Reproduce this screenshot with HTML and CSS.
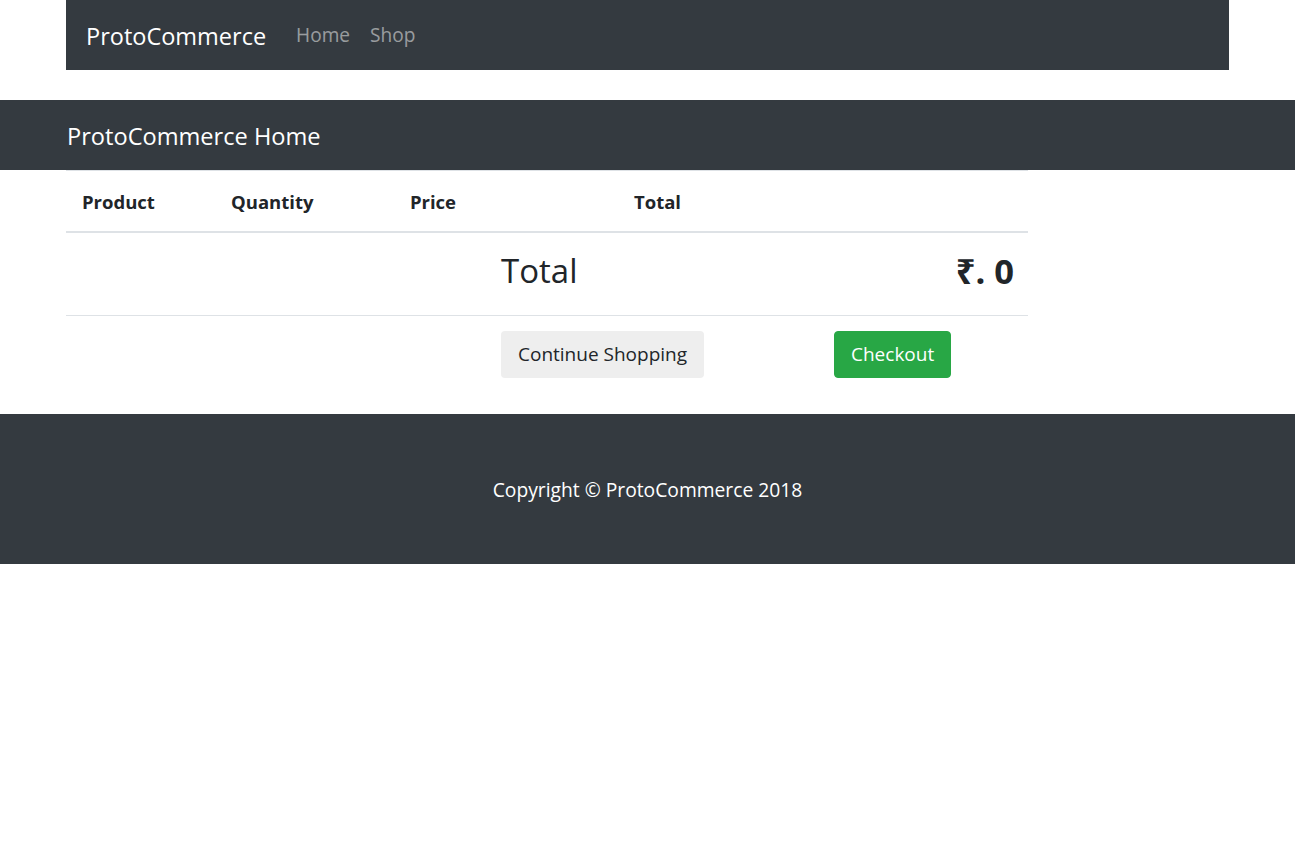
FILE: index.html
```html
<!DOCTYPE html>
<html lang="en">
<head>
  <meta charset="UTF-8">
  <title>ProtoCommerce</title>
  <link rel="stylesheet" href="styles.css">
</head>
<body>

  <nav class="navbar">
    <a class="brand" href="#">ProtoCommerce</a>
    <ul class="nav-links">
      <li><a href="#">Home</a></li>
      <li><a href="#">Shop</a></li>
    </ul>
  </nav>

  <header class="page-head">
    <div class="wrap">
      <h4>ProtoCommerce Home</h4>
    </div>
  </header>

  <main class="wrap">
    <table class="cart">
      <colgroup>
        <col class="c-product">
        <col class="c-qty">
        <col class="c-price">
        <col class="c-total">
        <col class="c-extra">
      </colgroup>
      <thead>
        <tr>
          <th>Product</th>
          <th>Quantity</th>
          <th class="center">Price</th>
          <th class="center">Total</th>
          <th></th>
        </tr>
      </thead>
      <tbody>
        <tr class="sum-row">
          <td></td>
          <td></td>
          <td></td>
          <td><h3>Total</h3></td>
          <td class="right"><h3><strong>₹. 0</strong></h3></td>
        </tr>
        <tr class="action-row">
          <td></td>
          <td></td>
          <td></td>
          <td><button class="btn btn-default">Continue Shopping</button></td>
          <td><button class="btn btn-success">Checkout</button></td>
        </tr>
      </tbody>
    </table>
  </main>

  <footer class="site-foot">
    <p>Copyright © ProtoCommerce 2018</p>
  </footer>

</body>
</html>
```

FILE: styles.css
```css
body {
  margin: 0;
  font-family: "Open Sans", "Noto Sans", sans-serif;
  font-size: 16px;
  color: #212529;
  background: #fff;
}

a {
  text-decoration: none;
}

.wrap {
  width: 1163px;
  margin: 0 auto;
}

/* top bar */
.navbar {
  width: 1163px;
  height: 70px;
  margin: 0 auto 30px;
  padding: 0 20px;
  box-sizing: border-box;
  background: #343a40;
  display: flex;
  align-items: center;
}

.brand {
  color: #fff;
  font-size: 23.5px;
  margin-top: 2px;
}

.nav-links {
  list-style: none;
  margin: 0 0 0 30px;
  padding: 0;
  display: flex;
  gap: 20px;
}

.nav-links a {
  color: rgba(255, 255, 255, 0.5);
  font-size: 19.1px;
  display: block;
}

/* dark heading band */
.page-head {
  background: #343a40;
  height: 70px;
  display: flex;
  align-items: center;
}

.page-head .wrap {
  padding: 2px 0 0 1px;
  box-sizing: border-box;
}

.page-head h4 {
  margin: 0;
  color: #fff;
  font-size: 23.6px;
  font-weight: 400;
}

/* cart table */
.cart {
  width: 962px;
  border-collapse: collapse;
  table-layout: fixed;
  margin-bottom: 24px;
}

.c-product { width: 151px; }
.c-qty { width: 156px; }
.c-price { width: 116px; }
.c-total { width: 333px; }
.c-extra { width: 206px; }

.cart th,
.cart td {
  padding: 12px;
  text-align: left;
  vertical-align: top;
  border-top: 1px solid #dee2e6;
}

.cart th {
  padding: 19px 12px 17px 16px;
  font-size: 18.5px;
  font-weight: 700;
  border-bottom: 2px solid #dee2e6;
  line-height: 24px;
}

.cart th:nth-child(2) {
  padding-left: 14px;
}

.cart th.center {
  text-align: center;
}

.cart td.right {
  text-align: right;
  padding-right: 14px;
}

.sum-row td {
  height: 58px;
}

.cart h3 {
  margin: 6px 0 0;
  font-size: 33px;
  font-weight: 500;
  line-height: 40px;
}

.cart h3 strong {
  font-size: 34.5px;
  font-weight: 700;
}

.action-row td {
  border-top: 1px solid #dee2e6;
  padding-top: 15px;
}

.btn {
  font-family: inherit;
  font-size: 19px;
  line-height: 27px;
  padding: 9px 16px;
  border: 1px solid transparent;
  border-radius: 4px;
  cursor: pointer;
}

.btn-default {
  background: #eeeeee;
  color: #212529;
}

.btn-success {
  background: #28a745;
  border-color: #28a745;
  color: #fff;
}

/* footer */
.site-foot {
  background: #343a40;
  height: 150px;
  display: flex;
  align-items: center;
  justify-content: center;
}

.site-foot p {
  margin: 0;
  color: #fff;
  font-size: 19.25px;
}
```
